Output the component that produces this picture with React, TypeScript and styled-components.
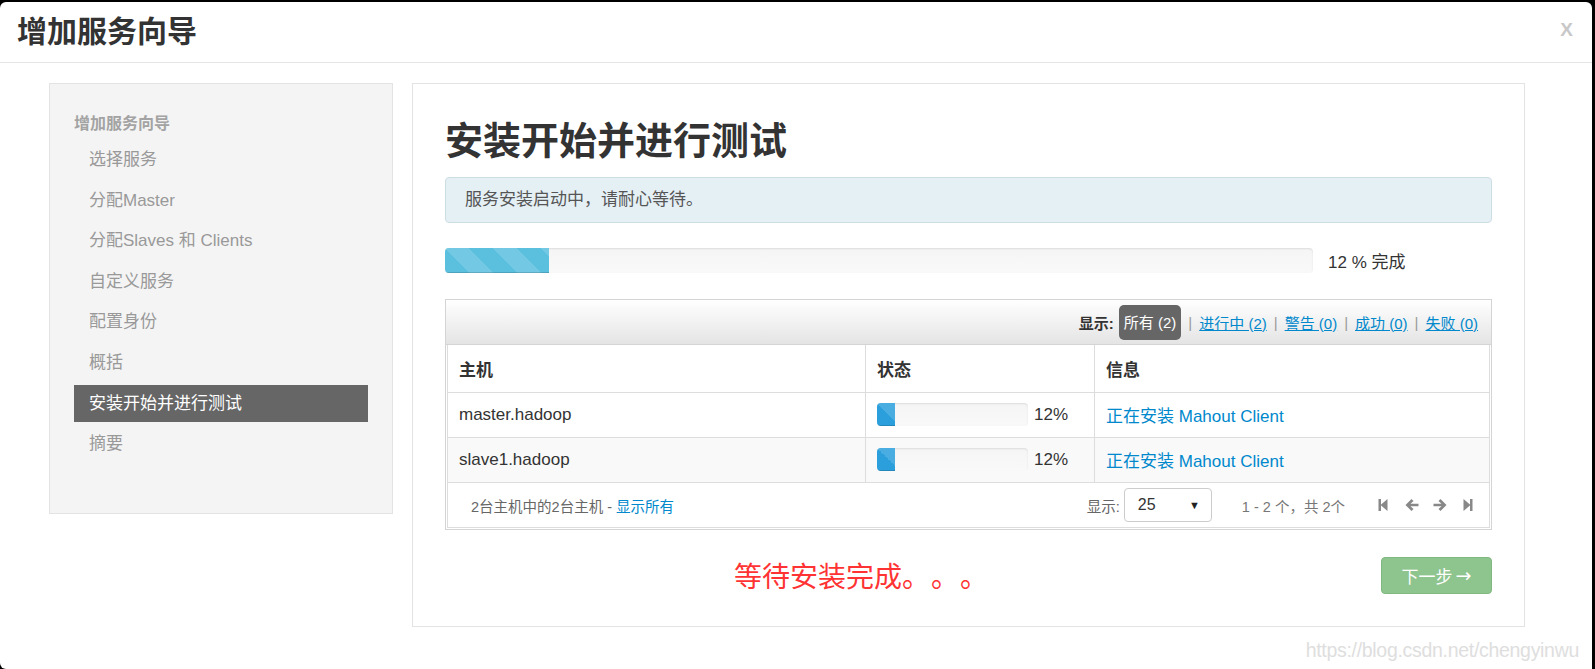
import React from "react";
import styled, { createGlobalStyle, css } from "styled-components";

const FONT = `"Liberation Sans", Arial, "Noto Sans CJK SC", sans-serif`;

const GlobalStyle = createGlobalStyle`
  html, body {
    margin: 0;
    padding: 0;
    background: #000;
    font-family: ${FONT};
    color: #333;
  }
  * { box-sizing: border-box; }
`;

//frame
const Modal = styled.div`
  position: relative;
  margin: 2px 3px 0 0;
  height: 667px;
  background: #fff;
  border-radius: 6px 6px 0 6px;
  overflow: hidden;
`;
const Header = styled.div`
  height: 61px;
  border-bottom: 1px solid #e5e5e5;
  display: flex;
  align-items: center;
  justify-content: space-between;
  padding: 0 19px 0 17px;
`;
const HeaderTitle = styled.h3`
  margin: 0;
  font-size: 30px;
  line-height: 40px;
  font-weight: bold;
  color: #333;
`;
const Close = styled.span`
  font-size: 19px;
  font-weight: bold;
  color: #c8c8c8;
  margin-top: -4px;
`;
const Body = styled.div`
  display: flex;
  align-items: flex-start;
  gap: 19px;
  padding: 20px 0 0 49px;
`;

//sidebar
const Sidebar = styled.div`
  width: 344px;
  height: 431px;
  background: #f4f4f4;
  border: 1px solid #e3e3e3;
  padding: 28px 24px 0 24px;
`;
const SideHeading = styled.div`
  font-size: 16px;
  line-height: 24px;
  font-weight: bold;
  color: #a3a3a3;
  margin-bottom: 5px;
`;
const NavItem = styled.div<{ $active?: boolean }>`
  height: 37px;
  line-height: 37px;
  padding-left: 15px;
  font-size: 17px;
  color: #999;
  margin-bottom: 3.6px;
  ${(p) =>
    p.$active &&
    css`
      background: #666;
      color: #fff;
    `}
`;

//main panel
const Panel = styled.div`
  width: 1113px;
  height: 544px;
  border: 1px solid #e3e3e3;
  padding: 0 32px;
  display: flex;
  flex-direction: column;
`;
const Title = styled.h2`
  margin: 35px 0 0;
  font-size: 38px;
  line-height: 44px;
  font-weight: bold;
  color: #333;
`;
const Alert = styled.div`
  margin-top: 14px;
  height: 46px;
  line-height: 44px;
  padding: 0 19px;
  background: #e5f0f5;
  border: 1px solid #cddde4;
  border-radius: 4px;
  font-size: 17px;
  color: #555;
`;
const ProgressRow = styled.div`
  margin-top: 25px;
  display: flex;
  align-items: center;
  gap: 15px;
`;
const stripes = css`
  background-image: linear-gradient(
    45deg,
    rgba(255, 255, 255, 0.15) 25%,
    transparent 25%,
    transparent 50%,
    rgba(255, 255, 255, 0.15) 50%,
    rgba(255, 255, 255, 0.15) 75%,
    transparent 75%,
    transparent
  );
`;
const Track = styled.div<{ $w: number; $h: number }>`
  width: ${(p) => p.$w}px;
  height: ${(p) => p.$h}px;
  border-radius: 4px;
  background: linear-gradient(#f5f5f5, #f9f9f9);
  box-shadow: inset 0 1px 2px rgba(0, 0, 0, 0.1);
  overflow: hidden;
`;
const Fill = styled.div<{ $color: string }>`
  height: 100%;
  background-color: ${(p) => p.$color};
  ${stripes}
  background-size: 48px 48px;
  box-shadow: inset 0 -1px 0 rgba(0, 0, 0, 0.15);
`;
const ProgressText = styled.span`
  font-size: 17px;
  color: #333;
`;

//hosts table
const TableBox = styled.div`
  margin-top: 26px;
  border: 1px solid #d4d4d4;
`;
const Toolbar = styled.div`
  height: 45px;
  background: linear-gradient(#ffffff, #e4e4e4);
  display: flex;
  justify-content: flex-end;
  align-items: center;
  padding-right: 13px;
  font-size: 15px;
  border-bottom: 1px solid #d4d4d4;
`;
const FilterLabel = styled.span`
  font-weight: bold;
  color: #333;
  margin-right: 5px;
`;
const Badge = styled.span`
  background: #666;
  color: #fff;
  border-radius: 5px;
  height: 35px;
  line-height: 35px;
  padding: 0 5px;
`;
const Sep = styled.span`
  color: #999;
  margin: 0 7px;
`;
const FilterLink = styled.a`
  color: #0088cc;
  text-decoration: underline;
`;
const Table = styled.table`
  width: calc(100% - 2px);
  margin: 0 1px;
  border-collapse: collapse;
  font-size: 17px;
  border-left: 1px solid #ddd;
  border-right: 1px solid #ddd;
`;
const Th = styled.th<{ $w?: number }>`
  width: ${(p) => (p.$w ? `${p.$w}px` : "auto")};
  height: 47px;
  text-align: left;
  padding: 0 10px 0 11px;
  font-weight: bold;
  color: #333;
  border-left: 1px solid #ddd;
`;
const Tr = styled.tr<{ $odd?: boolean }>`
  background: ${(p) => (p.$odd ? "#f9f9f9" : "#fff")};
  border-top: 1px solid #ddd;
`;
const Td = styled.td`
  height: 45px;
  padding: 0 10px 0 11px;
  color: #333;
  border-left: 1px solid #ddd;
`;
const StatusCell = styled.div`
  display: flex;
  align-items: center;
  gap: 6px;
`;
const InfoLink = styled.a`
  color: #0088cc;
  text-decoration: none;
`;
const Footer = styled.div`
  height: 46px;
  margin: 0 1px 1px;
  border: 1px solid #ddd;
  display: flex;
  align-items: center;
  justify-content: space-between;
  padding: 0 14px 0 23px;
  font-size: 14.5px;
  color: #666;
`;
const FooterRight = styled.div`
  display: flex;
  align-items: center;
`;
const SelectBox = styled.div`
  width: 88px;
  height: 34px;
  margin-left: 4px;
  border: 1px solid #ccc;
  border-radius: 4px;
  display: flex;
  align-items: center;
  justify-content: space-between;
  padding: 0 11px 0 13px;
  font-size: 16px;
  color: #333;
`;
const Caret = styled.span`
  font-size: 11px;
  color: #222;
`;
const Range = styled.span`
  margin-left: 30px;
  color: #777;
`;
const Pager = styled.div`
  display: flex;
  align-items: center;
  gap: 14px;
  margin-left: 32px;
`;

//bottom
const BottomRow = styled.div`
  margin-top: 25px;
  display: flex;
  align-items: center;
  justify-content: space-between;
`;
const WaitText = styled.span`
  margin-left: 289px;
  font-size: 28px;
  color: #f33;
`;
const Dots = styled.span`
  letter-spacing: 15px;
`;
const NextButton = styled.button`
  width: 111px;
  height: 37px;
  background: #8ec48e;
  border: 1px solid #80b880;
  border-radius: 4px;
  color: #fff;
  font-family: ${FONT};
  font-size: 17px;
  display: flex;
  align-items: center;
  justify-content: center;
`;
const Arrow = styled.span`
  font-family: "DejaVu Sans", sans-serif;
  font-size: 19px;
  margin-left: 3px;
`;
const Watermark = styled.span`
  position: absolute;
  right: 13px;
  bottom: 7px;
  font-size: 19.5px;
  letter-spacing: -0.3px;
  color: #dedede;
`;

const PagerIcon = ({ kind }: { kind: "first" | "prev" | "next" | "last" }) => {
  const shapes: Record<string, React.ReactNode> = {
    first: (
      <>
        <rect x="1" y="1" width="2.5" height="12" />
        <polygon points="3,7 10,1 10,13" />
      </>
    ),
    prev: <polygon points="0,7 6,1 8,3 5,5.8 13,5.8 13,8.2 5,8.2 8,11 6,13" />,
    next: <polygon points="13,7 7,1 5,3 8,5.8 0,5.8 0,8.2 8,8.2 5,11 7,13" />,
    last: (
      <>
        <rect x="8.5" y="1" width="2.5" height="12" />
        <polygon points="9,7 2,1 2,13" />
      </>
    ),
  };
  return (
    <svg width="14" height="14" viewBox="0 0 13 14" fill="#888">
      {shapes[kind]}
    </svg>
  );
};

const steps = [
  "选择服务",
  "分配Master",
  "分配Slaves 和 Clients",
  "自定义服务",
  "配置身份",
  "概括",
  "安装开始并进行测试",
  "摘要",
];

const hosts = ["master.hadoop", "slave1.hadoop"];

export default () => {
  return (
    <>
      <GlobalStyle />
      <Modal>
        <Header>
          <HeaderTitle>增加服务向导</HeaderTitle>
          <Close>X</Close>
        </Header>
        <Body>
          <Sidebar>
            <SideHeading>增加服务向导</SideHeading>
            {steps.map((s) => (
              <NavItem key={s} $active={s === "安装开始并进行测试"}>
                {s}
              </NavItem>
            ))}
          </Sidebar>
          <Panel>
            <Title>安装开始并进行测试</Title>
            <Alert>服务安装启动中，请耐心等待。</Alert>
            <ProgressRow>
              <Track $w={868} $h={25}>
                <Fill $color="#5bc0de" style={{ width: "12%" }} />
              </Track>
              <ProgressText>12 % 完成</ProgressText>
            </ProgressRow>
            <TableBox>
              <Toolbar>
                <FilterLabel>显示:</FilterLabel>
                <Badge>所有 (2)</Badge>
                <Sep>|</Sep>
                <FilterLink>进行中 (2)</FilterLink>
                <Sep>|</Sep>
                <FilterLink>警告 (0)</FilterLink>
                <Sep>|</Sep>
                <FilterLink>成功 (0)</FilterLink>
                <Sep>|</Sep>
                <FilterLink>失败 (0)</FilterLink>
              </Toolbar>
              <Table>
                <thead>
                  <tr>
                    <Th $w={418}>主机</Th>
                    <Th $w={229}>状态</Th>
                    <Th>信息</Th>
                  </tr>
                </thead>
                <tbody>
                  {hosts.map((h, i) => (
                    <Tr key={h} $odd={i % 2 === 1}>
                      <Td>{h}</Td>
                      <Td>
                        <StatusCell>
                          <Track $w={151} $h={23}>
                            <Fill $color="#2a9fdc" style={{ width: "12%" }} />
                          </Track>
                          12%
                        </StatusCell>
                      </Td>
                      <Td>
                        <InfoLink>正在安装 Mahout Client</InfoLink>
                      </Td>
                    </Tr>
                  ))}
                </tbody>
              </Table>
              <Footer>
                <span>
                  2台主机中的2台主机 - <InfoLink>显示所有</InfoLink>
                </span>
                <FooterRight>
                  <span>显示:</span>
                  <SelectBox>
                    25<Caret>▼</Caret>
                  </SelectBox>
                  <Range>1 - 2 个，共 2个</Range>
                  <Pager>
                    <PagerIcon kind="first" />
                    <PagerIcon kind="prev" />
                    <PagerIcon kind="next" />
                    <PagerIcon kind="last" />
                  </Pager>
                </FooterRight>
              </Footer>
            </TableBox>
            <BottomRow>
              <WaitText>
                等待安装完成<Dots>。。。</Dots>
              </WaitText>
              <NextButton>
                下一步<Arrow>→</Arrow>
              </NextButton>
            </BottomRow>
          </Panel>
        </Body>
        <Watermark>https://blog.csdn.net/chengyinwu</Watermark>
      </Modal>
    </>
  );
};
